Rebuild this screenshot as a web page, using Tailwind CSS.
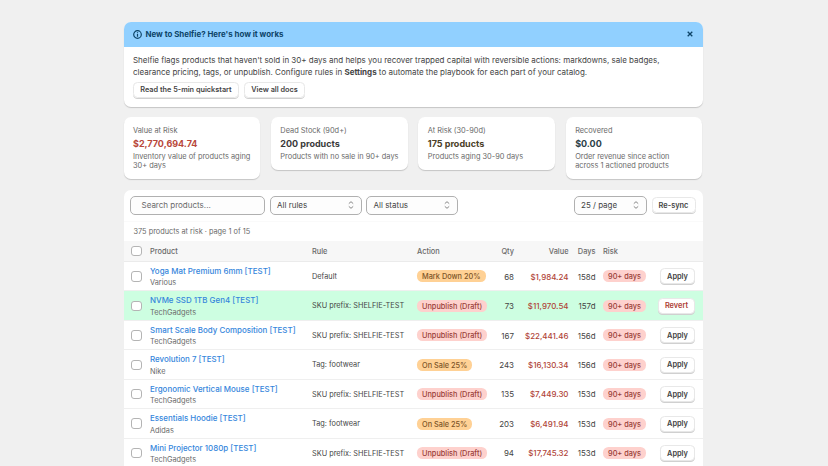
<!DOCTYPE html>
<html lang="en">
<head>
<meta charset="utf-8">
<title>Shelfie</title>
<script src="https://cdn.jsdelivr.net/npm/@tailwindcss/browser@4"></script>
</head>
<body class="h-[466px] overflow-hidden bg-[#f0f0f0] font-['Inter',sans-serif] text-[8px] leading-[12px] text-[#444]">
<main class="ml-[123.5px] w-[579px] pt-[21.5px]">

  <section class="h-[85.5px] overflow-hidden rounded-[7px] bg-white shadow-[0_1px_1px_#0000002e]">
    <header class="flex h-[25.5px] items-center bg-[#91d0ff] pr-[10px] pl-[9px] text-[#0d4468]">
      <svg class="size-[9px]" viewBox="0 0 9 9" fill="none" stroke="currentColor" stroke-width="1.2"><circle cx="4.5" cy="4.5" r="3.8"/><path d="M4.5 4.1v2.6M4.5 2.2v1"/></svg>
      <h2 class="ml-[4px] flex-1 text-[7.9px] font-bold">New to Shelfie? Here's how it works</h2>
      <svg class="size-[6px]" viewBox="0 0 6 6" fill="none" stroke="currentColor" stroke-width="1.3"><path d="M.7.7l4.6 4.6M5.3.7L.7 5.3"/></svg>
    </header>
    <div class="px-[9.5px] pt-[6.5px]">
      <p class="whitespace-nowrap text-[7.99px] leading-[12px]">Shelfie flags products that haven't sold in 30+ days and helps you recover trapped capital with reversible actions: markdowns, sale badges,<br>clearance pricing, tags, or unpublish. Configure rules in <b>Settings</b> to automate the playbook for each part of your catalog.</p>
      <div class="mt-[4.5px] flex gap-[5px] text-[7.3px] font-semibold">
        <button class="h-[16px] w-[106px] rounded-[4.5px] border border-[#e8e8e8] pt-[0.5px] shadow-[0_1px_0_#d0d0d0]">Read the 5-min quickstart</button>
        <button class="h-[16px] w-[61px] rounded-[4.5px] border border-[#e8e8e8] pt-[0.5px] shadow-[0_1px_0_#d0d0d0]">View all docs</button>
      </div>
    </div>
  </section>

  <section class="mt-[10px] flex h-[73px] items-start gap-[10.5px] text-[7.4px] leading-[9.4px] whitespace-nowrap text-[#6a6a6a]">
    <div class="h-[62px] w-[137px] rounded-[7px] bg-white px-[9.5px] pt-[9px] shadow-[0_1px_1px_#0000002e]">
      <h3>Value at Risk</h3><p class="mt-[1.5px] mb-[1px] text-[9px] leading-[14px] font-bold text-[#b8473a]">$2,770,694.74</p><p>Inventory value of products aging<br>30+ days</p>
    </div>
    <div class="h-[52.5px] w-[137px] rounded-[7px] bg-white px-[9.5px] pt-[9px] shadow-[0_1px_1px_#0000002e]">
      <h3>Dead Stock (90d+)</h3><p class="mt-[1.5px] mb-[1px] text-[9px] leading-[14px] font-bold text-[#3a3a3a]">200 products</p><p>Products with no sale in 90+ days</p>
    </div>
    <div class="h-[52.5px] w-[137px] rounded-[7px] bg-white px-[9.5px] pt-[9px] shadow-[0_1px_1px_#0000002e]">
      <h3>At Risk (30-90d)</h3><p class="mt-[1.5px] mb-[1px] text-[9px] leading-[14px] font-bold text-[#4b4027]">175 products</p><p>Products aging 30-90 days</p>
    </div>
    <div class="h-[62px] w-[137px] rounded-[7px] bg-white px-[9.5px] pt-[9px] shadow-[0_1px_1px_#0000002e]">
      <h3>Recovered</h3><p class="mt-[1.5px] mb-[1px] text-[9px] leading-[14px] font-bold text-[#2c4047]">$0.00</p><p>Order revenue since action<br>across 1 actioned products</p>
    </div>
  </section>

  <section class="ml-[0.5px] h-[290px] w-[578.5px] overflow-hidden rounded-t-[7px] bg-white">
    <div class="flex h-[31.5px] items-center border-b border-[#fafafa] pr-[7px] pl-[6px]">
      <div class="flex h-[19px] w-[135px] items-center rounded-[5px] border border-[#b0b0b0] bg-[#fdfdfd] pl-[10.5px] text-[8px] text-[#6a6a6a]">Search products...</div>
      <div class="ml-[4.5px] flex h-[19px] w-[92px] items-center justify-between rounded-[5px] border border-[#b0b0b0] bg-[#fdfdfd] pr-[7px] pl-[6.5px]">All rules <svg class="h-[8px] w-[6px]" viewBox="0 0 6 8" fill="none" stroke="#6a6a6a" stroke-width=".8"><path d="M.8 2.6L3 .7l2.2 1.9M.8 5.4L3 7.3l2.2-1.9"/></svg></div>
      <div class="ml-[4.5px] flex h-[19px] w-[92px] items-center justify-between rounded-[5px] border border-[#b0b0b0] bg-[#fdfdfd] pr-[7px] pl-[6.5px]">All status <svg class="h-[8px] w-[6px]" viewBox="0 0 6 8" fill="none" stroke="#6a6a6a" stroke-width=".8"><path d="M.8 2.6L3 .7l2.2 1.9M.8 5.4L3 7.3l2.2-1.9"/></svg></div>
      <div class="ml-auto flex h-[19px] w-[73.5px] items-center justify-between rounded-[5px] border border-[#b0b0b0] bg-[#fdfdfd] pr-[7px] pl-[6.5px]">25 / page <svg class="h-[8px] w-[6px]" viewBox="0 0 6 8" fill="none" stroke="#6a6a6a" stroke-width=".8"><path d="M.8 2.6L3 .7l2.2 1.9M.8 5.4L3 7.3l2.2-1.9"/></svg></div>
      <button class="ml-[4.5px] h-[16px] w-[44px] rounded-[4.5px] border border-[#e8e8e8] pt-px text-[7.4px] font-semibold shadow-[0_1px_0_#d0d0d0]">Re-sync</button>
    </div>
    <p class="h-[19px] pt-[4px] pl-[9.5px] text-[7.35px] text-[#6a6a6a]">375 products at risk · page 1 of 15</p>
    <div class="grid h-[21.5px] grid-cols-[19px_162px_105px_65px_32px_54.5px_27px_7.5px_42px_50px] items-center border-b border-[#ebebeb] bg-[#f7f7f7] pl-[7px] text-[7.4px] font-medium text-[#6a6a6a]">
      <i class="size-[10.5px] rounded-[3px] border border-[#b4b4b4] bg-white"></i><span class="pt-[2px]">Product</span><span class="pt-[2px]">Rule</span><span class="pt-[2px]">Action</span><span class="pt-[2px] text-right">Qty</span><span class="pt-[2px] text-right">Value</span><span class="pt-[2px] text-right">Days</span><span></span><span class="pt-[2px]">Risk</span>
    </div>
    <div id="rows"></div>
  </section>
</main>
<script>
const data = [
 ["Yoga Mat Premium 6mm [TEST]","Various","Default","Mark Down 20%","68","$1,984.24","158d"],
 ["NVMe SSD 1TB Gen4 [TEST]","TechGadgets","SKU prefix: SHELFIE-TEST","Unpublish (Draft)","73","$11,970.54","157d"],
 ["Smart Scale Body Composition [TEST]","TechGadgets","SKU prefix: SHELFIE-TEST","Unpublish (Draft)","167","$22,441.46","156d"],
 ["Revolution 7 [TEST]","Nike","Tag: footwear","On Sale 25%","243","$16,130.34","156d"],
 ["Ergonomic Vertical Mouse [TEST]","TechGadgets","SKU prefix: SHELFIE-TEST","Unpublish (Draft)","135","$7,449.30","153d"],
 ["Essentials Hoodie [TEST]","Adidas","Tag: footwear","On Sale 25%","203","$6,491.94","153d"],
 ["Mini Projector 1080p [TEST]","TechGadgets","SKU prefix: SHELFIE-TEST","Unpublish (Draft)","94","$17,745.32","153d"]];
document.getElementById("rows").innerHTML = data.map((r, i) => `
<div class="grid h-[29.45px] grid-cols-[19px_162px_105px_65px_32px_54.5px_27px_7.5px_42px_50px] items-center border-b border-[#efefef] pt-[0.5px] pl-[7px] text-[7.35px] whitespace-nowrap ${i == 1 ? "bg-[#cdfee1]" : "bg-white"}">
<i class="size-[10.5px] rounded-[3px] border border-[#b4b4b4] bg-white"></i>
<div class="pt-[2px] leading-[11.5px]"><a class="block text-[7.95px] font-medium text-[#3586dc]">${r[0]}</a><span class="block text-[7.35px] text-[#6a6a6a]">${r[1]}</span></div>
<span class="pt-px">${r[2]}</span>
<span class="flex"><b class="h-[12px] rounded-[5.5px] px-[5px] text-[7.35px] leading-[13px] font-medium ${r[3][0] == "U" ? "bg-[#fed1cd] text-[#9a4038]" : "bg-[#ffd195] text-[#7d5528]"}">${r[3]}</b></span>
<span class="pt-[0.5px] text-right text-[7.95px]">${r[4]}</span>
<span class="pt-[0.5px] text-right text-[7.95px] font-medium text-[#b04438]">${r[5]}</span>
<span class="pt-[0.5px] text-right text-[7.95px]">${r[6]}</span><span></span>
<span class="flex"><b class="h-[12px] rounded-[5.5px] bg-[#fed1cd] px-[5px] text-[7.35px] leading-[13px] font-medium text-[#9a4038]">90+ days</b></span>
<button class="h-[16px] justify-self-end rounded-[4.5px] border border-[#e8e8e8] bg-white pt-px text-[7.4px] font-semibold shadow-[0_1px_0_#d0d0d0] ${i == 1 ? "w-[37px] text-[#ad4034]" : "w-[35px]"}">${i == 1 ? "Revert" : "Apply"}</button>
</div>`).join("");
</script>
</body>
</html>
